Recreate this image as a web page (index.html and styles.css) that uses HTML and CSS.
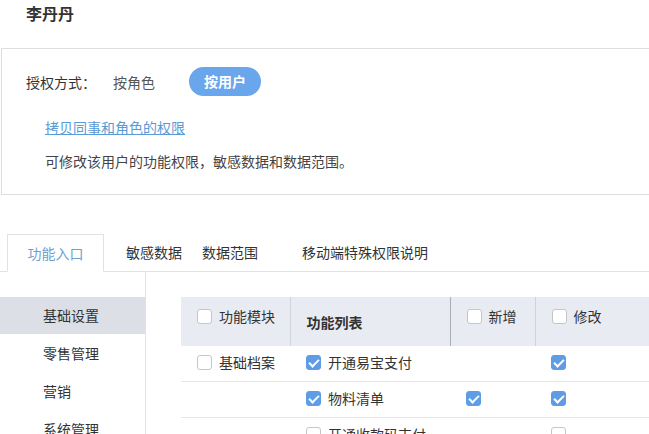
FILE: index.html
```html
<!DOCTYPE html>
<html lang="zh">
<head>
<meta charset="utf-8">
<link rel="stylesheet" href="styles.css">
</head>
<body>
<div class="page">
  <div class="title">李丹丹</div>
  <div class="auth-box">
    <div class="auth-row">
      <span class="auth-label">授权方式：</span>
      <span class="auth-opt">按角色</span>
      <span class="auth-btn">按用户</span>
    </div>
    <a class="copy-link" href="#">拷贝同事和角色的权限</a>
    <div class="auth-note">可修改该用户的功能权限，敏感数据和数据范围。</div>
  </div>
  <div class="tabs">
    <div class="tab active">功能入口</div>
    <div class="tab">敏感数据</div>
    <div class="tab">数据范围</div>
    <div class="tab wide">移动端特殊权限说明</div>
  </div>
  <div class="main">
    <div class="side">
      <div class="side-item active">基础设置</div>
      <div class="side-item">零售管理</div>
      <div class="side-item">营销</div>
      <div class="side-item">系统管理</div>
    </div>
    <div class="content">
      <table class="perm">
        <colgroup>
          <col class="c1"><col class="c2"><col class="c3"><col class="c4">
        </colgroup>
        <thead>
          <tr>
            <th class="h-check d-light"><span class="cb"></span>功能模块</th>
            <th class="h-bold d-dark">功能列表</th>
            <th class="h-check d-light"><span class="cb"></span>新增</th>
            <th class="h-check"><span class="cb"></span>修改</th>
          </tr>
        </thead>
        <tbody>
          <tr>
            <td><span class="cb"></span>基础档案</td>
            <td><span class="cb on"></span>开通易宝支付</td>
            <td></td>
            <td><span class="cb on"></span></td>
          </tr>
          <tr>
            <td></td>
            <td><span class="cb on"></span>物料清单</td>
            <td><span class="cb on"></span></td>
            <td><span class="cb on"></span></td>
          </tr>
          <tr>
            <td></td>
            <td><span class="cb"></span>开通收款码支付</td>
            <td></td>
            <td><span class="cb"></span></td>
          </tr>
        </tbody>
      </table>
    </div>
  </div>
</div>
</body>
</html>
```

FILE: styles.css
```css
html, body {
  margin: 0;
  padding: 0;
  background: #fff;
  overflow: hidden;
}
body {
  font-family: "Noto Sans CJK SC", "Noto Sans", sans-serif;
  font-size: 14px;
  color: #333;
}
.page {
  width: 700px;
  height: 434px;
  overflow: hidden;
}
.title {
  height: 48px;
  line-height: 26px;
  padding-left: 26px;
  font-size: 16px;
  font-weight: bold;
  color: #333;
  box-sizing: border-box;
}
.auth-box {
  margin-left: 1px;
  height: 147px;
  box-sizing: border-box;
  border: 1px solid #dedede;
  border-right: none;
  padding: 18px 0 0 24px;
}
.auth-row {
  display: flex;
  align-items: center;
  height: 29px;
}
.auth-label {
  color: #333;
  width: 87px;
}
.auth-opt {
  color: #555;
  width: 76px;
}
.auth-btn {
  width: 72px;
  height: 29px;
  line-height: 29px;
  text-align: center;
  border-radius: 15px;
  background: #6aa6ec;
  color: #fff;
  font-weight: bold;
}
.copy-link {
  display: block;
  margin: 21px 0 0 19px;
  width: max-content;
  line-height: 20px;
  color: #5a9ad6;
  text-decoration: underline;
}
.auth-note {
  margin: 14px 0 0 19px;
  line-height: 20px;
  color: #444;
}
.tabs {
  display: flex;
  margin-top: 39px;
  height: 38px;
  border-bottom: 1px solid #e2e2e2;
  box-sizing: border-box;
  padding-left: 7px;
}
.tab {
  height: 37px;
  line-height: 36px;
  color: #333;
  margin-right: 20px;
}
.tab.active {
  box-sizing: border-box;
  height: 38px;
  width: 97px;
  text-align: center;
  border: 1px solid #e2e2e2;
  border-bottom: 1px solid #fff;
  background: #fff;
  color: #6e9fcf;
  margin-right: 22px;
}
.tab.wide {
  margin-left: 24px;
}
.main {
  display: flex;
}
.side {
  width: 145px;
  height: 200px;
  border-right: 1px solid #e2e2e2;
  padding-top: 25px;
  box-sizing: content-box;
}
.side-item {
  height: 37px;
  line-height: 37px;
  padding-left: 43px;
  margin-bottom: 1px;
  color: #333;
}
.side-item.active {
  background: #dcdfe5;
}
.content {
  padding: 25px 0 0 35px;
}
.perm {
  border-collapse: collapse;
  table-layout: fixed;
  width: 500px;
}
.c1 { width: 109px; }
.c2 { width: 160px; }
.c3 { width: 85px; }
.c4 { width: 146px; }
.perm th {
  height: 49px;
  background: #e8ebf2;
  text-align: left;
  font-weight: normal;
  color: #333;
  vertical-align: top;
  line-height: 20px;
  padding: 9px 0 0 16px;
  box-sizing: border-box;
  white-space: nowrap;
}
.perm th.h-bold {
  font-weight: bold;
  padding-top: 15px;
}
.perm th.d-light { border-right: 1px solid #cfd3da; }
.perm th.d-dark { border-right: 1px solid #a9adb4; }
.perm td {
  box-sizing: border-box;
  height: 35px;
  padding: 0 0 2px 16px;
  border-bottom: 1px solid #e6e6e6;
  vertical-align: middle;
  white-space: nowrap;
  line-height: 20px;
}
.perm tbody tr:nth-child(2) td { height: 36px; }
.cb {
  display: inline-block;
  box-sizing: border-box;
  width: 15px;
  height: 15px;
  border: 1px solid #c6c6c6;
  border-radius: 3px;
  background: #fff;
  vertical-align: -2px;
  margin-right: 7px;
  position: relative;
}
.cb.on {
  background: #5e9de6;
  border-color: #5e9de6;
}
.cb.on::after {
  content: "";
  position: absolute;
  left: 4px;
  top: 1px;
  width: 4px;
  height: 8px;
  border: solid #fff;
  border-width: 0 2px 2px 0;
  transform: rotate(45deg);
}
```
